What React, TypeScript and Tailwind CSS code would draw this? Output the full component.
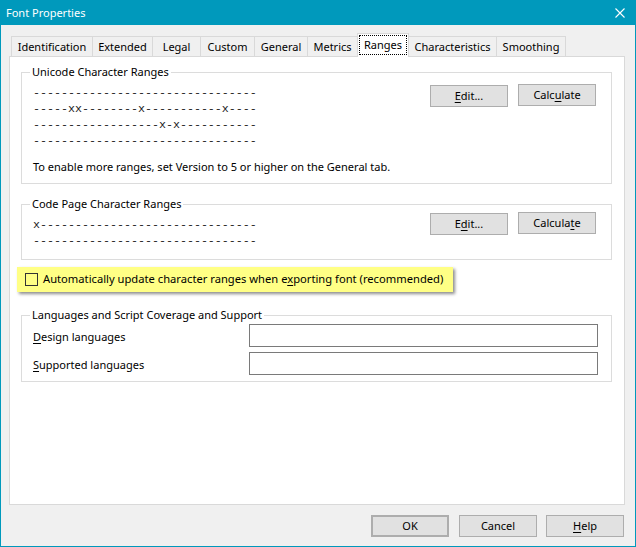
import React from "react";

const sans = { fontFamily: '"Noto Sans", "Open Sans", sans-serif' };
const mono = { fontFamily: '"Liberation Mono", "Courier New", monospace' };

const tabs = [
  { label: "Identification", w: "w-[81px]" },
  { label: "Extended", w: "w-[60px]" },
  { label: "Legal", w: "w-[48px]" },
  { label: "Custom", w: "w-[54px]" },
  { label: "General", w: "w-[53px]" },
  { label: "Metrics", w: "w-[50px]" },
  { label: "Ranges", w: "w-[52px]", active: true },
  { label: "Characteristics", w: "w-[87px]", afterActive: true },
  { label: "Smoothing", w: "w-[70px]", last: true },
];

const U = ({ children }: { children: React.ReactNode }) => (
  <span className="underline underline-offset-[2px]">{children}</span>
);

const Btn = ({
  children,
  className = "",
}: {
  children: React.ReactNode;
  className?: string;
}) => (
  <button
    type="button"
    className={`flex h-[22px] w-[78px] items-center justify-center border border-[#adadad] bg-[#e1e1e1] text-[11px] text-black ${className}`}
  >
    {children}
  </button>
);

const Group = ({
  title,
  className = "",
  children,
}: {
  title: string;
  className?: string;
  children: React.ReactNode;
}) => (
  <fieldset className={`border border-[#dcdcdc] ${className}`}>
    <legend className="ml-[8px] px-[2px] text-[11px] leading-[16px]">{title}</legend>
    {children}
  </fieldset>
);

const Lines = ({ rows }: { rows: string[] }) => (
  <div className="text-[11.67px] leading-[16px] text-[#222]" style={mono}>
    {rows.map((r, i) => (
      <div key={i} className="whitespace-pre">
        {r}
      </div>
    ))}
  </div>
);

export default function App() {
  return (
    <div
      className="flex h-[547px] w-[636px] flex-col border border-[#0099bc] bg-[#f0f0f0] text-black"
      style={sans}
    >
      {/* title bar */}
      <div className="flex h-[24px] items-center justify-between bg-[#0099bc] pl-[5px] pr-[10px] text-white">
        <span className="text-[11px]">Font Properties</span>
        <svg width="10" height="10" viewBox="0 0 10 10">
          <path d="M0.5 0.5 L9.5 9.5 M9.5 0.5 L0.5 9.5" stroke="white" strokeWidth="1.1" />
        </svg>
      </div>

      <div className="flex flex-1 flex-col pl-[8px] pt-[8px]">
        {/* tabs */}
        <div className="relative z-10 ml-[2px] flex h-[24px] items-end">
          {tabs.map((t) =>
            t.active ? (
              <div
                key={t.label}
                className={`${t.w} h-[24px] border-x border-t border-[#d9d9d9] bg-white px-[1px] pt-[1px] pb-[2px]`}
              >
                <div className="flex h-full items-center justify-center border border-dotted border-black text-[11px]">
                  {t.label}
                </div>
              </div>
            ) : (
              <div
                key={t.label}
                className={`${t.w} mb-[1px] flex h-[20px] items-center justify-center border-t border-[#d9d9d9] pt-[1px] text-[11px] ${
                  t.afterActive ? "" : "border-l"
                } ${t.last ? "border-r" : ""}`}
              >
                {t.label}
              </div>
            )
          )}
        </div>

        {/* panel */}
        <div className="-mt-[1px] flex h-[449px] w-[616px] flex-col border border-[#d9d9d9] bg-white pl-[11px] pr-[12px] pt-[7px]">
          <Group title="Unicode Character Ranges">
            <div className="flex justify-between pl-[11px] pr-[15px]">
              <div className="mt-[5px]">
                <Lines
                  rows={[
                    "--------------------------------",
                    "-----xx--------x-----------x----",
                    "------------------x-x-----------",
                    "--------------------------------",
                  ]}
                />
              </div>
              <div className="mt-[5px] flex gap-[10px]">
                <Btn>
                  <span>
                    <U>E</U>dit...
                  </span>
                </Btn>
                <Btn className="-mt-[1px]">
                  <span>
                    Calc<U>u</U>late
                  </span>
                </Btn>
              </div>
            </div>
            <div className="mt-[10px] pb-[8px] pl-[11px] text-[11px] leading-[16px]">
              To enable more ranges, set Version to 5 or higher on the General tab.
            </div>
          </Group>

          <Group title="Code Page Character Ranges" className="mt-[12px]">
            <div className="flex justify-between pb-[10px] pl-[11px] pr-[15px]">
              <div className="mt-[5px]">
                <Lines
                  rows={[
                    "x-------------------------------",
                    "--------------------------------",
                  ]}
                />
              </div>
              <div className="mt-[1px] flex gap-[10px]">
                <Btn>
                  <span>
                    E<U>d</U>it...
                  </span>
                </Btn>
                <Btn className="-mt-[1px]">
                  <span>
                    Calcula<U>t</U>e
                  </span>
                </Btn>
              </div>
            </div>
          </Group>

          <div className="-ml-[4px] mt-[7px] flex h-[25px] w-[436px] items-center bg-[#ffff85] pl-[8px] shadow-[2px_2px_3px_rgba(0,0,0,0.45)]">
            <div className="h-[13px] w-[13px] shrink-0 border border-[#333]" />
            <span className="ml-[5px] whitespace-nowrap text-[11.2px]">
              Automatically update character ranges when e<U>x</U>porting font (recommended)
            </span>
          </div>

          <Group title="Languages and Script Coverage and Support" className="mt-[15px]">
            <div className="flex flex-col gap-[5px] pb-[6px] pl-[11px] pr-[13px] pt-[1px]">
              <div className="flex items-center">
                <span className="w-[216px] pt-[4px] text-[11px]">
                  <U>D</U>esign languages
                </span>
                <div className="h-[23px] flex-1 border border-[#7a7a7a] bg-white" />
              </div>
              <div className="flex items-center">
                <span className="w-[216px] pt-[4px] text-[11px]">
                  <U>S</U>upported languages
                </span>
                <div className="h-[23px] flex-1 border border-[#7a7a7a] bg-white" />
              </div>
            </div>
          </Group>
        </div>

        {/* dialog buttons */}
        <div className="mt-[10px] flex w-[616px] justify-end pr-[1px]">
          <Btn className="border-2 border-[#0078d7]">OK</Btn>
          <Btn className="ml-[10px]">Cancel</Btn>
          <Btn className="ml-[9px] w-[77px]">
            <span>
              <U>H</U>elp
            </span>
          </Btn>
        </div>
      </div>
    </div>
  );
}
